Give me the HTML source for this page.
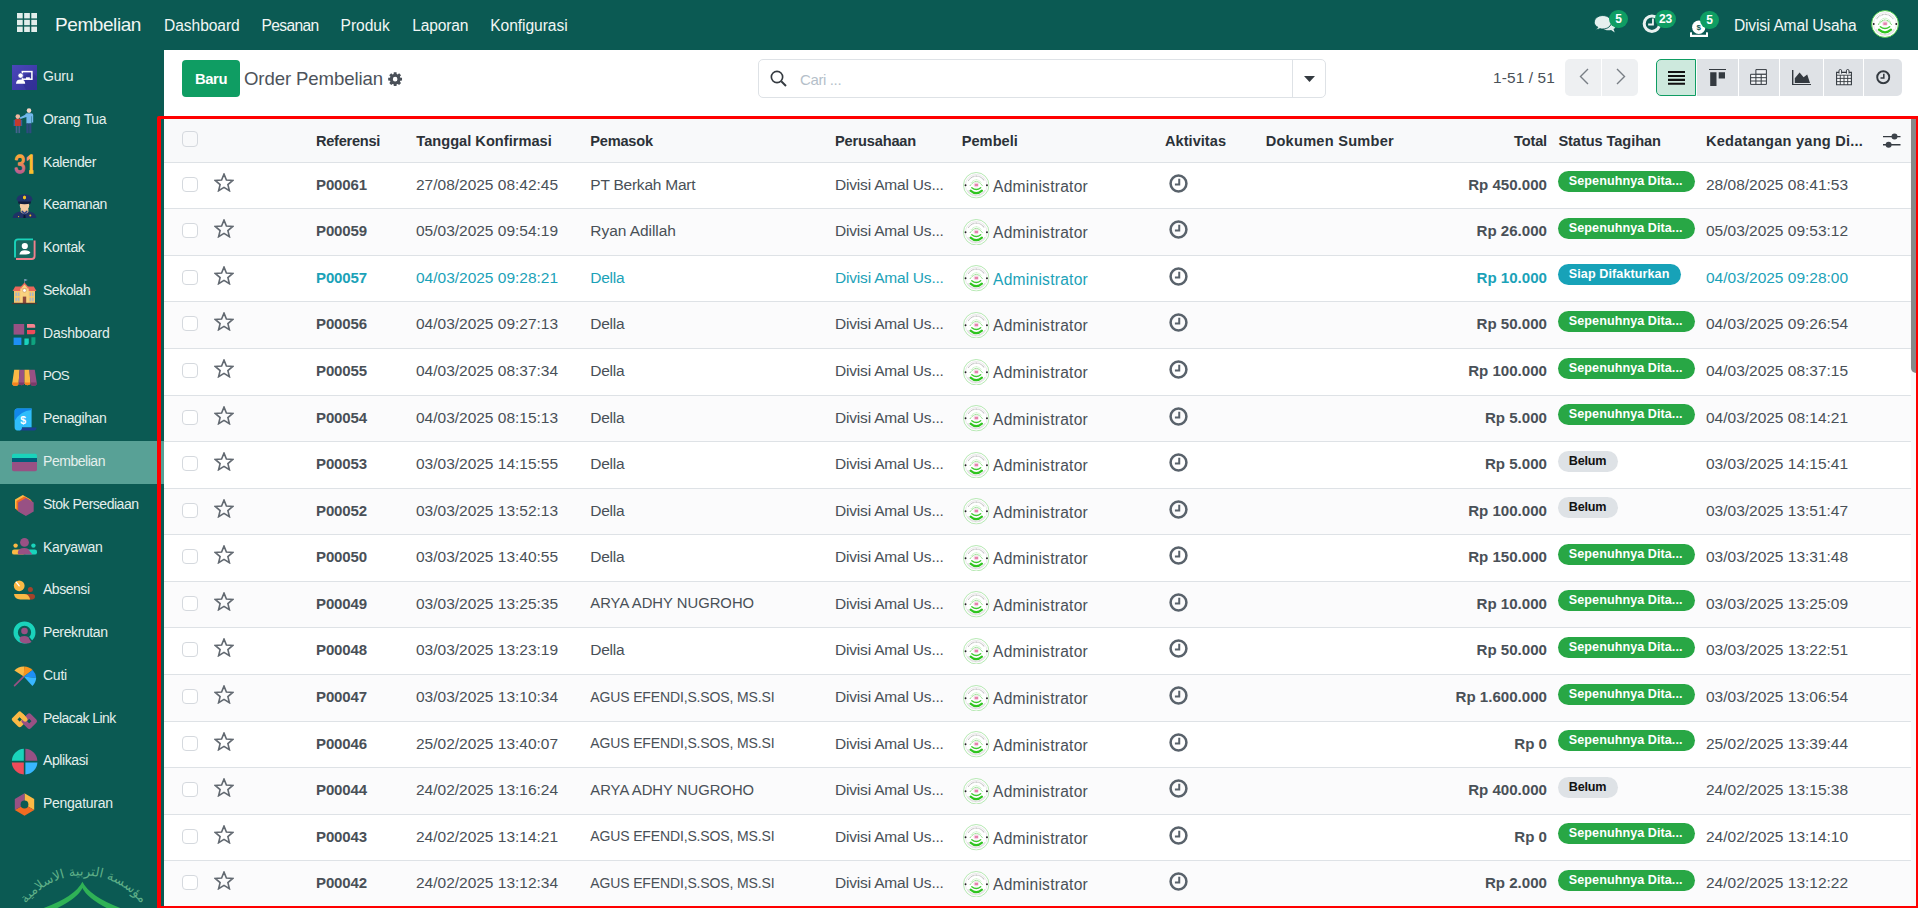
<!DOCTYPE html>
<html lang="id"><head><meta charset="utf-8"><title>Odoo - Order Pembelian</title>
<style>
*{box-sizing:border-box;margin:0;padding:0}
html,body{width:1918px;height:908px;overflow:hidden;background:#fff}
body{font-family:"Liberation Sans", sans-serif;font-size:15.5px;color:#495057;position:relative}
.abs{position:absolute}
.nav{position:absolute;left:0;top:0;width:1918px;height:50px;background:#0b5a53;color:#fff}
.nav .t{position:absolute;white-space:nowrap;line-height:50px;top:0.6px;color:#f1f6f5}
.side{position:absolute;left:0;top:50px;width:164px;height:858px;background:#0b5a53;overflow:hidden}
.side .it{position:absolute;left:0;width:164px;height:43px}
.side .it.act{background:#58a196}
.side .it svg{position:absolute;left:11px;top:8px;width:27px;height:27px}
.side .it span{position:absolute;left:43px;top:0;line-height:41.5px;font-size:14px;color:#e4efed;white-space:nowrap}
.cp{position:absolute;left:164px;top:50px;width:1754px;height:69px;background:#fff}
.tbl{position:absolute;left:164px;top:119px;width:1747px;height:789px;background:#fff;overflow:hidden}
.hd{position:absolute;left:0;top:0;width:1747px;height:44px;background:#f8f9fa;border-bottom:1px solid #dee2e6;font-weight:bold;color:#2c3238}
.hd span{position:absolute;top:1px;line-height:42px;white-space:nowrap;font-size:14.6px}
.row{position:absolute;left:0;width:1747px;border-bottom:1px solid #dee2e6;background:#fff}
.row.alt{background:#fbfbfc}
.row span.c{position:absolute;top:-1px;white-space:nowrap}
.row.info{color:#1ba2b8}
.row svg.ck{color:#59626b}
.cb{position:absolute;left:18px;width:16px;height:15px;border:1px solid #d5d9de;border-radius:4px;background:#fff}
.b{font-weight:bold}
.badge{position:absolute;left:1394px;height:21px;border-radius:11px;color:#fff;font-weight:bold;font-size:12.6px;line-height:21.6px;padding:0 10.8px;white-space:nowrap}
.badge.bg-s{width:137px}
.badge.bg-i{width:123px}
.badge.bg-n{width:60px}
.bg-s{background:#28a745}
.bg-i{background:#17a2b8}
.bg-n{background:#dee2e6;color:#111}
svg{display:block}
</style></head><body>
<svg width="0" height="0" style="position:absolute"><defs>
<symbol id="i-grid" viewBox="0 0 20 19"><rect x="0.00" y="0.00" width="5.7" height="5.4" fill="#e3eeec"/><rect x="7.15" y="0.00" width="5.7" height="5.4" fill="#e3eeec"/><rect x="14.30" y="0.00" width="5.7" height="5.4" fill="#e3eeec"/><rect x="0.00" y="6.80" width="5.7" height="5.4" fill="#e3eeec"/><rect x="7.15" y="6.80" width="5.7" height="5.4" fill="#e3eeec"/><rect x="14.30" y="6.80" width="5.7" height="5.4" fill="#e3eeec"/><rect x="0.00" y="13.60" width="5.7" height="5.4" fill="#e3eeec"/><rect x="7.15" y="13.60" width="5.7" height="5.4" fill="#e3eeec"/><rect x="14.30" y="13.60" width="5.7" height="5.4" fill="#e3eeec"/></symbol>
<symbol id="i-comments" viewBox="0 0 43 35">
<path d="M40 33.5 L33 28.8 Q30.5 29.5 28 29.5 C20 29.5 14.5 25.3 14.5 20 C14.5 14.7 20 10.5 28 10.5 C36 10.5 42 14.7 42 20 C42 23 40.3 25.4 37.6 27.2 Z" fill="#dfeceb"/>
<path d="M3 29.5 L7.5 23.5 C3 21.5 0.5 18 0.5 14 C0.5 7 7.5 1 17 1 C26.5 1 33.5 7 33.5 14 C33.5 21 26.5 27 17 27 Q14 27 11.5 26.3 Z" fill="#e6f0ef" stroke="#0b5a53" stroke-width="1.8"/>
</symbol>
<symbol id="i-clocknav" viewBox="0 0 40 40">
<circle cx="19.5" cy="21" r="15.2" fill="none" stroke="#e9f1f0" stroke-width="6"/>
<path d="M21.5 11V22.5H12" fill="none" stroke="#e9f1f0" stroke-width="3.6"/>
</symbol>
<symbol id="i-money" viewBox="0 0 36 34">
<rect x="0" y="24.5" width="36" height="9.5" rx="1" fill="#fff"/>
<rect x="4" y="24" width="28" height="5.5" fill="#0b5a53"/>
<circle cx="17.5" cy="14.5" r="13.3" fill="#fff"/>
<text x="17.5" y="20.5" text-anchor="middle" font-family="Liberation Sans, sans-serif" font-weight="bold" font-size="16" fill="#0b5a53">$</text>
</symbol>
<symbol id="i-cog" viewBox="0 0 28 28"><path d="M11.04 3.82 L11.29 0.37 L16.71 0.37 L16.96 3.82 L19.11 4.71 L21.72 2.44 L25.56 6.28 L23.29 8.89 L24.18 11.04 L27.63 11.29 L27.63 16.71 L24.18 16.96 L23.29 19.11 L25.56 21.72 L21.72 25.56 L19.11 23.29 L16.96 24.18 L16.71 27.63 L11.29 27.63 L11.04 24.18 L8.89 23.29 L6.28 25.56 L2.44 21.72 L4.71 19.11 L3.82 16.96 L0.37 16.71 L0.37 11.29 L3.82 11.04 L4.71 8.89 L2.44 6.28 L6.28 2.44 L8.89 4.71Z M18.50 14A4.5 4.5 0 1 0 9.50 14A4.5 4.5 0 1 0 18.50 14Z" fill="#4a5058" fill-rule="evenodd"/></symbol>
<symbol id="i-search" viewBox="0 0 34 34"><circle cx="14" cy="14" r="11.3" fill="none" stroke="#343a40" stroke-width="3.3"/><path d="M22.5 22.5L32 32" stroke="#343a40" stroke-width="3.9" stroke-linecap="butt"/></symbol>
<symbol id="i-vlist" viewBox="0 0 17 14"><path d="M0 0h17v2.1H0zM0 3.9h17v2.1H0zM0 7.8h17v2.1H0zM0 11.7h17v2.1H0z" fill="#111"/></symbol>
<symbol id="i-vkanban" viewBox="0 0 17 17"><path d="M0 0h17v1H0zM1.2 3.2h6.3V17H1.2zM9.7 3.2H16v6.3H9.7z" fill="#343a40"/></symbol>
<symbol id="i-vpivot" viewBox="0 0 17 16"><path d="M5.9 .6H16.4V5.3H5.9Z" fill="#eef0f3" stroke="#343a40" stroke-width="1"/><path d="M.6 5.3H16.4V15.4H.6Z" fill="#f6f7f9" stroke="#343a40" stroke-width="1"/><path d="M5.9 5.3V15.4M11.2 5.3V15.4M.6 8.7H16.4M.6 12H16.4" fill="none" stroke="#343a40" stroke-width="1"/></symbol>
<symbol id="i-vgraph" viewBox="0 0 19 15.5"><path d="M.7 0V14.8H19" fill="none" stroke="#343a40" stroke-width="1.4"/><path d="M2.8 13V8.2L7.6 2.6L11.6 7.2L15.2 4.6L18 13Z" fill="#343a40"/></symbol>
<symbol id="i-vcal" viewBox="0 0 16 16.5"><path d="M.6 3.4H15.4V15.9H.6Z" fill="#f6f7f9" stroke="#343a40" stroke-width="1.1"/><path d="M.6 6.2H15.4M4.3 6.2V15.9M8 6.2V15.9M11.7 6.2V15.9M.6 9.4H15.4M.6 12.6H15.4" stroke="#343a40" stroke-width=".9" fill="none"/><path d="M3 4.6V1.8Q3 .5 4.3 .5T5.6 1.8V4.6M10.4 4.6V1.8Q10.4 .5 11.7 .5T13 1.8V4.6" fill="#eef0f3" stroke="#343a40" stroke-width="1"/></symbol>
<symbol id="i-clock" viewBox="0 0 18 18"><circle cx="9" cy="9" r="7.5" fill="none" stroke="currentColor" stroke-width="2.4"/><path d="M9.7 4.6V9.9H5.6" fill="none" stroke="currentColor" stroke-width="1.9"/></symbol>
<symbol id="i-star" viewBox="0 0 20 19"><path d="M10.00 1.10 L12.41 6.98 L18.75 7.46 L13.90 11.57 L15.41 17.74 L10.00 14.40 L4.59 17.74 L6.10 11.57 L1.25 7.46 L7.59 6.98Z" fill="none" stroke="#626971" stroke-width="1.6" stroke-linejoin="miter"/></symbol>
<symbol id="i-sliders" viewBox="0 0 18 16"><path d="M0 3.6H17.5M0 11.8H17.5" stroke="#343a40" stroke-width="1.4"/><circle cx="11.5" cy="3.6" r="3" fill="#3d434a"/><circle cx="5.6" cy="11.8" r="3" fill="#3d434a"/></symbol>
<symbol id="i-logo" viewBox="0 0 52 52">
<circle cx="26" cy="26" r="25" fill="#fff" stroke="#45c93c" stroke-width="1.6"/>
<circle cx="26" cy="26" r="21.3" fill="none" stroke="#d9d4d9" stroke-width="1"/>
<path d="M10.5 17 A18 18 0 0 1 41.5 17" fill="none" stroke="#a9a9a9" stroke-width="2.2" stroke-dasharray="1.6 1" opacity=".85"/>
<path d="M9.5 36.5 A19.5 19.5 0 0 0 42.5 36.5" fill="none" stroke="#b9b9b9" stroke-width="2" stroke-dasharray="1.4 1.1" opacity=".8"/>
<path d="M13.5 27.5 Q26 10 38.5 27.5" fill="none" stroke="#6fd867" stroke-width="1.9" stroke-dasharray="2.4 .9"/>
<path d="M15.5 21.5 Q26 9 36.5 21.5" fill="none" stroke="#a8e6a2" stroke-width="1.5" stroke-dasharray="2 1"/>
<circle cx="26" cy="25" r="5.4" fill="#f7e3ec"/>
<rect x="23" y="23.2" width="6.4" height="4.6" fill="#e681ad"/>
<path d="M17.3 31 Q26 38 34.7 31" fill="none" stroke="#3cc92e" stroke-width="2.7" stroke-linecap="round"/>
<path d="M14.8 36.6 Q26 46.5 37.2 36.6" fill="none" stroke="#2fc41f" stroke-width="4.2" stroke-linecap="round"/>
<circle cx="5" cy="26" r="1.9" fill="#222"/><circle cx="47" cy="26" r="1.9" fill="#222"/>
</symbol>
<symbol id="i-logo2" viewBox="0 0 52 52">
<circle cx="26" cy="26" r="25" fill="#fff" stroke="#8fdc8a" stroke-width="1.3"/>
<circle cx="26" cy="26" r="21.3" fill="none" stroke="#d9d4d9" stroke-width="1"/>
<path d="M10.5 17 A18 18 0 0 1 41.5 17" fill="none" stroke="#a9a9a9" stroke-width="2.2" stroke-dasharray="1.6 1" opacity=".85"/>
<path d="M9.5 36.5 A19.5 19.5 0 0 0 42.5 36.5" fill="none" stroke="#b9b9b9" stroke-width="2" stroke-dasharray="1.4 1.1" opacity=".8"/>
<path d="M13.5 27.5 Q26 10 38.5 27.5" fill="none" stroke="#6fd867" stroke-width="1.9" stroke-dasharray="2.4 .9"/>
<path d="M15.5 21.5 Q26 9 36.5 21.5" fill="none" stroke="#a8e6a2" stroke-width="1.5" stroke-dasharray="2 1"/>
<circle cx="26" cy="25" r="5.4" fill="#f7e3ec"/>
<rect x="23" y="23.2" width="6.4" height="4.6" fill="#e681ad"/>
<path d="M17.3 31 Q26 38 34.7 31" fill="none" stroke="#3cc92e" stroke-width="2.7" stroke-linecap="round"/>
<path d="M14.8 36.6 Q26 46.5 37.2 36.6" fill="none" stroke="#2fc41f" stroke-width="4.2" stroke-linecap="round"/>
<circle cx="5" cy="26" r="1.9" fill="#222"/><circle cx="47" cy="26" r="1.9" fill="#222"/>
</symbol>
<linearGradient id="g31a" x1="0" y1="0" x2="0" y2="1"><stop offset="0" stop-color="#fbb03b"/><stop offset=".4" stop-color="#f5993f"/><stop offset=".72" stop-color="#c9658a"/><stop offset="1" stop-color="#9c5388"/></linearGradient>
<linearGradient id="g31b" x1="0" y1="0" x2="1" y2="0"><stop offset=".5" stop-color="#ee6a93"/><stop offset=".66" stop-color="#f59a62"/><stop offset=".74" stop-color="#fbc02d"/><stop offset="1" stop-color="#fbc02d"/></linearGradient>
<linearGradient id="gguru" x1="0" y1="0" x2="1" y2="1"><stop offset="0" stop-color="#4a47ba"/><stop offset="1" stop-color="#36339c"/></linearGradient>
</defs></svg>
<div class="nav"><svg class="abs" style="left:17px;top:13px" width="20" height="19" viewBox="0 0 20 19"><use href="#i-grid"/></svg><span class="t" style="left:55px;top:0;font-size:19px;letter-spacing:-0.42px">Pembelian</span><span class="t" style="left:164.1px;font-size:15.6px;letter-spacing:-0.09px">Dashboard</span><span class="t" style="left:261.5px;font-size:15.6px;letter-spacing:-0.65px">Pesanan</span><span class="t" style="left:340.5px;font-size:15.6px;letter-spacing:-0.02px">Produk</span><span class="t" style="left:412.3px;font-size:15.6px;letter-spacing:-0.19px">Laporan</span><span class="t" style="left:490.2px;font-size:15.6px;letter-spacing:-0.06px">Konfigurasi</span><svg class="abs" style="left:1593.8px;top:15.2px" width="22.3" height="18.2" viewBox="0 0 43 35"><use href="#i-comments"/></svg><svg class="abs" style="left:1642.3px;top:12.6px" width="20.4" height="20.4" viewBox="0 0 40 40"><use href="#i-clocknav"/></svg><svg class="abs" style="left:1690px;top:19.5px" width="18" height="17" viewBox="0 0 36 34"><use href="#i-money"/></svg><span class="abs" style="left:1609px;top:9.5px;width:19.3px;height:18.5px;border-radius:9.5px;background:#0f9d63;color:#fff;font-size:12px;font-weight:bold;line-height:18.5px;text-align:center">5</span><span class="abs" style="left:1655px;top:9.5px;width:21.2px;height:18.5px;border-radius:9.5px;background:#0f9d63;color:#fff;font-size:12px;font-weight:bold;line-height:18.5px;text-align:center">23</span><span class="abs" style="left:1699.8px;top:10.5px;width:19.5px;height:18.5px;border-radius:9.5px;background:#0f9d63;color:#fff;font-size:12px;font-weight:bold;line-height:18.5px;text-align:center">5</span><span class="t" style="left:1734px;top:1px;font-size:15.6px;letter-spacing:-0.19px">Divisi Amal Usaha</span><svg class="abs" style="left:1871.3px;top:9.5px" width="28" height="28" viewBox="0 0 52 52"><use href="#i-logo"/></svg></div>
<div class="side"><div class="it" style="top:6.00px"><svg viewBox="0 0 27 27"><rect x="1" y="1" width="25" height="25" fill="url(#gguru)"/><path d="M9 14L21 8L26 13V26H15Z" fill="#2e2b8f" opacity=".55"/><rect x="11.3" y="7.6" width="9.6" height="7.6" fill="none" stroke="#fff" stroke-width="1.5"/><rect x="15" y="13.3" width="3.8" height="1.9" fill="#fff"/><circle cx="9.6" cy="11.6" r="2.7" fill="#fff" stroke="#3f3cab" stroke-width=".8"/><path d="M5 19.8q0-4.3 4.6-4.3t4.6 4.3z" fill="#fff"/></svg><span style="letter-spacing:-0.21px">Guru</span></div><div class="it" style="top:48.78px"><svg viewBox="0 0 27 27"><circle cx="18" cy="3.6" r="2.3" fill="#f6d6c6"/><path d="M14.2 7.7q0-1.5 1.5-1.5h4.8q1.7 0 1.7 1.7V15.4h-1.4V9.2h-.4v7.4h-5V9.9L9.4 12L8.8 10.6Z" fill="#72b8ec"/><rect x="15.4" y="16.4" width="2.2" height="9.8" fill="#2f4a80"/><rect x="18.2" y="16.4" width="2.2" height="9.8" fill="#2f4a80"/><circle cx="6.8" cy="9.6" r="2.3" fill="#f0b7a0"/><path d="M3.4 13.5q0-1.6 1.6-1.6h3.8q1.6 0 1.6 1.6v5.6H3.4z" fill="#c4392d"/><rect x="2.6" y="13" width="1.4" height="6" fill="#3f5e96"/><rect x="9.8" y="13" width="1.4" height="6" fill="#3f5e96"/><rect x="4.7" y="19.1" width="1.7" height="7" fill="#46628f"/><rect x="7.4" y="19.1" width="1.7" height="7" fill="#46628f"/></svg><span style="letter-spacing:-0.32px">Orang Tua</span></div><div class="it" style="top:91.56px"><svg viewBox="0 0 27 27"><text x="3.2" y="22.8" font-family="Liberation Sans, sans-serif" font-size="25.4" stroke-width="1.5" stroke-linejoin="round" textLength="22" lengthAdjust="spacingAndGlyphs"><tspan fill="url(#g31a)" stroke="url(#g31a)">3</tspan><tspan fill="url(#g31b)" stroke="url(#g31b)">1</tspan></text><path d="M14 19.9H18.1V25H14ZM22.5 19.9H26V25H22.5Z" fill="#0b5a53"/></svg><span style="letter-spacing:-0.38px">Kalender</span></div><div class="it" style="top:134.34px"><svg viewBox="0 0 27 27"><path d="M9.6 17h7.8v5H9.6z" fill="#e6b98f"/><ellipse cx="13.5" cy="13.6" rx="4.7" ry="5.2" fill="#f3cba3"/><path d="M5.6 7.2Q6 2.6 13.5 2.2Q21 2.6 21.4 7.2L19.8 10H7.2Z" fill="#20346a"/><path d="M7.2 9.6h12.6v1.9q-6.3 1.5-12.6 0z" fill="#101b3c"/><path d="M13.5 3.4l1.5 1v2l-1.5 1.1-1.5-1.1v-2z" fill="#f4c21c"/><path d="M1.6 26Q2 21 8.6 19.6L13.5 22.6L18.4 19.6Q25 21 25.4 26Z" fill="#1f3266"/><path d="M12.8 22.4h1.4l.5 3.6h-2.4z" fill="#0e1733"/><path d="M10.3 19.4l3.2 3.4 3.2-3.4-1 -.9-2.2 2-2.2-2z" fill="#2b4285"/><circle cx="19.3" cy="23.4" r="1" fill="#f4c21c"/><circle cx="7.6" cy="24.6" r=".6" fill="#f4c21c"/></svg><span style="letter-spacing:-0.50px">Keamanan</span></div><div class="it" style="top:177.12px"><svg viewBox="0 0 27 27"><rect x="4" y="4.4" width="19.6" height="19.6" rx="3" fill="#17665f"/><path d="M23.6 5.4V21Q23.6 24 20.6 24H5" fill="none" stroke="#f07f8c" stroke-width="1.9"/><path d="M4 22.4V7.4Q4 4.4 7 4.4H22" fill="none" stroke="#1ad3bb" stroke-width="1.9"/><circle cx="13.8" cy="11" r="3.1" fill="#fff"/><path d="M8.4 19.6q.6-4.4 5.4-4.4t5.6 2.6q-1 1.8-4.4 1.8z" fill="#fff"/></svg><span style="letter-spacing:-0.35px">Kontak</span></div><div class="it" style="top:219.90px"><svg viewBox="0 0 27 27"><path d="M13.5 1v4" stroke="#7a8794" stroke-width=".7"/><path d="M13.6 1.1l3.2.9-3.2 1z" fill="#8fb4d9"/><rect x="3" y="12" width="21" height="13" fill="#f6c56a"/><path d="M1.6 13L4.2 8.4H22.8L25.4 13Z" fill="#e9675a"/><rect x="9.3" y="9.6" width="8.4" height="15.4" fill="#f9d27f"/><path d="M8.2 10.4L13.5 4.4L18.8 10.4Z" fill="#e9675a"/><path d="M9.9 10.4L13.5 6.4L17.1 10.4Z" fill="#f9d27f"/><circle cx="13.5" cy="12.4" r="1.9" fill="#fff" stroke="#c98b4a" stroke-width=".6"/><rect x="11.8" y="18.6" width="3.4" height="6.4" fill="#8e4a3b"/><path d="M4.4 14.6h1.6v3.4H4.4zM6.8 14.6h1.6v3.4H6.8zM18.6 14.6h1.6v3.4h-1.6zM21 14.6h1.6v3.4H21zM4.4 19.8h1.6v3.4H4.4zM6.8 19.8h1.6v3.4H6.8zM18.6 19.8h1.6v3.4h-1.6zM21 19.8h1.6v3.4H21z" fill="#a9b7c6"/><rect x="1" y="24.8" width="25" height="1.3" fill="#4b3a33"/></svg><span style="letter-spacing:-0.48px">Sekolah</span></div><div class="it" style="top:262.68px"><svg viewBox="0 0 27 27"><rect x="2.6" y="3" width="10.6" height="10.6" fill="#985184"/><path d="M16 3h6.4a1.8 1.8 0 011.8 1.8V6.8H16z" fill="#f7838f"/><path d="M16 9h8.2v2.4a1.8 1.8 0 01-1.8 1.8H16z" fill="#ef4b5a"/><rect x="2.6" y="16.6" width="7.8" height="7.4" fill="#1e8ff5"/><path d="M13.4 17.4h4.4V22a2 2 0 01-2 2h-2.4z" fill="#1ad3bb"/><path d="M20.4 16.2h4V22a2 2 0 01-2 2h-2z" fill="#0fa37f"/></svg><span style="letter-spacing:-0.22px">Dashboard</span></div><div class="it" style="top:305.46px"><svg viewBox="0 0 27 27"><path d="M3.2 6.8H8.6L7.6 20.2a3.2 2.6 0 01-6.4 0Z" fill="#fbb945"/><path d="M8.6 6.8H13.5V20.2a3 2.6 0 01-5.9 0Z" fill="#985184"/><path d="M13.5 6.8H18.4L19.4 20.2a3 2.6 0 01-5.9 0Z" fill="#fbb945"/><path d="M18.4 6.8H23.8L25.8 20.2a3.2 2.6 0 01-6.4 0Z" fill="#985184"/><path d="M1.2 19.6h6.4v.6a3.2 2.6 0 01-6.4 0zM13.5 19.6h5.9v.6a3 2.6 0 01-5.9 0z" fill="#f58220"/><path d="M7.6 19.6h5.9v.6a3 2.6 0 01-5.9 0zM19.4 19.6h6.4v.6a3.2 2.6 0 01-6.4 0z" fill="#7b3b69"/></svg><span style="font-size:13.3px;letter-spacing:-0.70px">POS</span></div><div class="it" style="top:348.24px"><svg viewBox="0 0 27 27"><path d="M10 21.4h15.6q-.4 3.2-3.4 3.2H8z" fill="#1c3f95"/><path d="M3.6 5.4Q3.6 2.6 6.4 2.6H20.6V21.2H11q.2 3.4-3.6 3.4T3.6 21.2Z" fill="#2fbdfb"/><path d="M3.6 5.4Q3.6 2.6 6.4 2.6H20.6V4Q9 5 3.6 15Z" fill="#1287ea"/><text x="12.2" y="18.2" text-anchor="middle" font-family="Liberation Sans, sans-serif" font-weight="bold" font-size="10.5" fill="#fff">$</text></svg><span style="letter-spacing:-0.41px">Penagihan</span></div><div class="it act" style="top:391.02px"><svg viewBox="0 0 27 27"><path d="M1 6.6Q1 4.8 2.8 4.8H24.2Q26 4.8 26 6.6V9H1Z" fill="#1ad3bb"/><rect x="1" y="9" width="25" height="4" fill="#005e7a"/><path d="M1 13H26V20.4Q26 22.2 24.2 22.2H2.8Q1 22.2 1 20.4Z" fill="#985184"/></svg><span style="letter-spacing:-0.46px">Pembelian</span></div><div class="it" style="top:433.80px"><svg viewBox="0 0 27 27"><polygon points="11.80,2.90 19.59,7.40 19.59,16.40 11.80,20.90 4.01,16.40 4.01,7.40" fill="#fbb945"/><polygon points="13.30,4.40 21.09,8.90 21.09,17.90 13.30,22.40 5.51,17.90 5.51,8.90" fill="#f26b21"/><polygon points="14.90,6.00 22.69,10.50 22.69,19.50 14.90,24.00 7.11,19.50 7.11,10.50" fill="#985184"/></svg><span style="letter-spacing:-0.48px">Stok Persediaan</span></div><div class="it" style="top:476.58px"><svg viewBox="0 0 27 27"><circle cx="4.6" cy="10.6" r="2.2" fill="#fbb945"/><rect x="1" y="14.4" width="13" height="5.2" rx="2.2" fill="#fbb945"/><circle cx="22.4" cy="10.6" r="2.2" fill="#1ad3bb"/><rect x="13" y="14.4" width="13" height="5.2" rx="2.2" fill="#1ad3bb"/><circle cx="13.5" cy="7.4" r="4.4" fill="#985184"/><path d="M6.8 17.2Q7.6 13 13.5 13Q17.6 13 19 16.4L21.4 19.6H9Q6.6 19.6 6.8 17.2Z" fill="#985184"/></svg><span style="letter-spacing:-0.36px">Karyawan</span></div><div class="it" style="top:519.36px"><svg viewBox="0 0 27 27"><circle cx="8.2" cy="8.8" r="5.4" fill="#fbb945"/><path d="M8.2 8.8L5.2 5.2" stroke="#fff" stroke-width="1.3" stroke-linecap="round"/><circle cx="19.4" cy="12.6" r="2.5" fill="#a3432b"/><path d="M14 17h7.4Q24 17 24 19.6T21.4 22.4H17z" fill="#a3432b"/><path d="M3 17H13.4Q17.6 17 19.2 22.4H9.4Q3.4 22.4 3 17Z" fill="#fbb945"/></svg><span style="letter-spacing:-0.47px">Absensi</span></div><div class="it" style="top:562.14px"><svg viewBox="0 0 27 27"><circle cx="13.5" cy="12.4" r="8.8" fill="none" stroke="#1ad3bb" stroke-width="4.4"/><path d="M17 18L22 24" stroke="#0b5a53" stroke-width="3.4"/><circle cx="13.5" cy="11" r="3.3" fill="#985184"/><path d="M8.6 18.4Q9.4 16 13.5 16Q17.4 16 18.6 19.4L20.6 22Q16 24.8 10.2 22.6Q8.2 21 8.6 18.4Z" fill="#985184"/></svg><span style="letter-spacing:-0.38px">Perekrutan</span></div><div class="it" style="top:604.92px"><svg viewBox="0 0 27 27"><path d="M12.6 13.6L3.6 22.6" stroke="#985184" stroke-width="1.7" stroke-linecap="round"/><path d="M3.4 7.6A12.4 12.4 0 0113.2 3.4L12.8 13.4Z" fill="#fbb945"/><path d="M13.2 3.4A12.4 12.4 0 0121.6 7L12.8 13.4Z" fill="#f7941d"/><path d="M21.6 7A12.4 12.4 0 0125.2 15L12.8 13.4Z" fill="#1e8ff5"/><path d="M25.2 15A12.4 12.4 0 0121.4 23L12.8 13.4Z" fill="#38b6ff"/><path d="M3.4 7.6L12.8 13.4L9 16Z" fill="#fbb945" opacity="0"/></svg><span style="letter-spacing:-0.25px">Cuti</span></div><div class="it" style="top:647.70px"><svg viewBox="0 0 27 27"><path d="M8.7 7.800000000000001L14.2 13.3L8.7 18.8L3.1999999999999993 13.3Z" fill="none" stroke="#fbb945" stroke-width="4.6" stroke-linejoin="round"/><path d="M18.2 9.7L23.7 15.2L18.2 20.7L12.7 15.2Z" fill="none" stroke="#985184" stroke-width="4.6" stroke-linejoin="round"/><path d="M10.6 9.7L14.2 13.3" stroke="#fbb945" stroke-width="4.6" stroke-linecap="round"/></svg><span style="letter-spacing:-0.56px">Pelacak Link</span></div><div class="it" style="top:690.48px"><svg viewBox="0 0 27 27"><path d="M12.8 12.8V.8A12.7 12.7 0 00.8 12.8Z" fill="#1ad3bb"/><path d="M14.4 12.8V.8A12.7 12.7 0 0126.4 12.8Z" fill="#985184"/><path d="M12.8 14.4V26.4A12.7 12.7 0 01.8 14.4Z" fill="#ef4b5a"/><path d="M14.4 14.4V26.4A12.7 12.7 0 0026.4 14.4Z" fill="#38b6ff"/></svg><span style="letter-spacing:-0.41px">Aplikasi</span></div><div class="it" style="top:733.26px"><svg viewBox="0 0 27 27"><polygon points="13.50,13.50 13.50,2.30 23.20,7.90 23.20,19.10" fill="#fbb945"/><polygon points="13.50,13.50 23.20,19.10 13.50,24.70 3.80,19.10" fill="#f26b21"/><polygon points="13.50,13.50 3.80,19.10 3.80,7.90 13.50,2.30" fill="#985184"/><circle cx="13.5" cy="13.5" r="3.9" fill="#0b5a53"/></svg><span style="letter-spacing:-0.27px">Pengaturan</span></div><svg class="abs" style="left:0;top:790px" width="164" height="68" viewBox="0 0 164 68">
<defs><path id="arc" d="M21.6 69.8 A73 73 0 0 1 145.4 69.8"/></defs>
<text font-family="DejaVu Sans, sans-serif" font-size="13" fill="#5fb088" direction="rtl" unicode-bidi="bidi-override"><textPath href="#arc" startOffset="50%" text-anchor="middle">مؤسسة التربية الاسلامية</textPath></text>
<path d="M82.4 41.8 Q75 57 41 69 L55.5 69 Q78 58 82.4 48 Q87 58 108.5 69 L123 69 Q90 57 82.4 41.8Z" fill="#2fb256"/>
</svg></div>
<div class="cp"><div class="abs" style="left:18px;top:10px;width:58px;height:37px;border-radius:4px;background:#0f9d63;color:#fff;text-align:center;line-height:38.8px;font-size:14.8px;font-weight:bold"><span style="letter-spacing:-0.38px">Baru</span></div><span class="abs" style="left:80px;top:10.3px;line-height:38px;font-size:18.6px;color:#4d535b;white-space:nowrap;letter-spacing:-0.11px">Order Pembelian</span><svg class="abs" style="left:224.4px;top:21.8px" width="14.3" height="14.3" viewBox="0 0 28 28"><use href="#i-cog"/></svg><div class="abs" style="left:594px;top:9px;width:568px;height:38.5px;border:1px solid #dee2e6;border-radius:5px"></div><div class="abs" style="left:1128px;top:10px;width:1px;height:37px;background:#dee2e6"></div><svg class="abs" style="left:606px;top:20.3px" width="17" height="17" viewBox="0 0 34 34"><use href="#i-search"/></svg><span class="abs" style="left:636px;top:11.4px;line-height:38px;font-size:15px;color:#b5bfca;white-space:nowrap;letter-spacing:-0.37px">Cari ...</span><svg class="abs" style="left:1140px;top:26px" width="11" height="6" viewBox="0 0 11 6"><path d="M0 0h11L5.5 6z" fill="#343a40"/></svg><span class="abs" style="left:1329px;top:9px;line-height:38px;font-size:15.4px;white-space:nowrap;letter-spacing:0.13px">1-51 / 51</span><div class="abs" style="left:1401px;top:9px;width:36px;height:37px;background:#eef0f2;border-radius:5px 0 0 5px"></div><div class="abs" style="left:1438px;top:9px;width:36px;height:37px;background:#eef0f2;border-radius:0 5px 5px 0"></div><svg class="abs" style="left:1414.5px;top:17.6px" width="10" height="17" viewBox="0 0 10 17"><path d="M9 1L1.5 8.5L9 16" fill="none" stroke="#787e85" stroke-width="1.4"/></svg><svg class="abs" style="left:1451.5px;top:17.6px" width="10" height="17" viewBox="0 0 10 17"><path d="M1 1L8.5 8.5L1 16" fill="none" stroke="#787e85" stroke-width="1.4"/></svg><div class="abs" style="left:1492.2px;top:9px;width:39.9px;height:37px;background:#cde9dd;border:1px solid #0f9d63;border-radius:5px 0 0 5px"></div><div class="abs" style="left:1533px;top:9px;width:41.2px;height:37px;background:#dfe2e6"></div><div class="abs" style="left:1575px;top:9px;width:40.3px;height:37px;background:#dfe2e6"></div><div class="abs" style="left:1616.2px;top:9px;width:42.8px;height:37px;background:#dfe2e6"></div><div class="abs" style="left:1660px;top:9px;width:39.0px;height:37px;background:#dfe2e6"></div><div class="abs" style="left:1700px;top:9px;width:37.7px;height:37px;background:#dfe2e6;border-radius:0 5px 5px 0"></div><svg class="abs" style="left:1504px;top:20.5px" width="17" height="14" viewBox="0 0 17 14"><use href="#i-vlist"/></svg><svg class="abs" style="left:1545.4px;top:18.7px" width="17" height="17" viewBox="0 0 17 17"><use href="#i-vkanban"/></svg><svg class="abs" style="left:1586.3px;top:19.4px" width="17" height="16" viewBox="0 0 17 16"><use href="#i-vpivot"/></svg><svg class="abs" style="left:1628.4px;top:19.9px" width="19" height="15.5" viewBox="0 0 19 15.5"><use href="#i-vgraph"/></svg><svg class="abs" style="left:1671.6px;top:19px" width="16" height="16.5" viewBox="0 0 16 16.5"><use href="#i-vcal"/></svg><svg class="abs" style="left:1712.2px;top:20.4px;color:#343a40" width="14.5" height="14.5" viewBox="0 0 18 18"><use href="#i-clock"/></svg></div>
<div class="tbl"><div class="hd"><i class="cb" style="top:12px;height:16px;background:#f8f9fa"></i><span style="left:152px;letter-spacing:-0.28px">Referensi</span><span style="left:252.3px;letter-spacing:0.02px">Tanggal Konfirmasi</span><span style="left:426.3px;letter-spacing:-0.23px">Pemasok</span><span style="left:671px;letter-spacing:-0.17px">Perusahaan</span><span style="left:797.7px;letter-spacing:0.04px">Pembeli</span><span style="left:1001px;letter-spacing:0.02px">Aktivitas</span><span style="left:1101.7px;letter-spacing:0.24px">Dokumen Sumber</span><span style="left:1394.4px;letter-spacing:-0.07px">Status Tagihan</span><span style="left:1542px;letter-spacing:0.22px">Kedatangan yang Di...</span><span style="right:364px;letter-spacing:-0.16px">Total</span><svg class="abs" style="left:1718.5px;top:13.5px" width="18" height="16" viewBox="0 0 18 16"><use href="#i-sliders"/></svg></div><div class="row" style="top:44px;height:46px;line-height:45px"><i class="cb" style="top:13.5px"></i><svg class="abs" style="left:50.3px;top:9.5px" width="20" height="19" viewBox="0 0 20 19"><use href="#i-star"/></svg><span class="c b" style="left:152px;font-size:15px;letter-spacing:-0.12px">P00061</span><span class="c" style="left:252px;letter-spacing:-0.01px">27/08/2025 08:42:45</span><span class="c" style="left:426.3px;letter-spacing:-0.23px">PT Berkah Mart</span><span class="c" style="left:671px;letter-spacing:-0.19px">Divisi Amal Us...</span><svg class="abs" style="left:799px;top:9.0px" width="26.5" height="26.5" viewBox="0 0 52 52"><use href="#i-logo2"/></svg><span class="c" style="left:829px;top:0.5px;font-size:15.6px;letter-spacing:0.24px">Administrator</span><svg class="abs ck" style="left:1004.8px;top:10.9px" width="19" height="19" viewBox="0 0 18 18"><use href="#i-clock"/></svg><span class="c b" style="right:364px;font-size:15.1px">Rp 450.000</span><div class="badge bg-s" style="top:8.2px"><span style="letter-spacing:0.06px">Sepenuhnya Dita...</span></div><span class="c" style="left:1542px;letter-spacing:-0.01px">28/08/2025 08:41:53</span></div><div class="row alt" style="top:90px;height:47px;line-height:46px"><i class="cb" style="top:14.0px"></i><svg class="abs" style="left:50.3px;top:10.0px" width="20" height="19" viewBox="0 0 20 19"><use href="#i-star"/></svg><span class="c b" style="left:152px;font-size:15px;letter-spacing:-0.12px">P00059</span><span class="c" style="left:252px;letter-spacing:-0.01px">05/03/2025 09:54:19</span><span class="c" style="left:426.3px;letter-spacing:-0.05px">Ryan Adillah</span><span class="c" style="left:671px;letter-spacing:-0.19px">Divisi Amal Us...</span><svg class="abs" style="left:799px;top:9.5px" width="26.5" height="26.5" viewBox="0 0 52 52"><use href="#i-logo2"/></svg><span class="c" style="left:829px;top:0.5px;font-size:15.6px;letter-spacing:0.24px">Administrator</span><svg class="abs ck" style="left:1004.8px;top:11.4px" width="19" height="19" viewBox="0 0 18 18"><use href="#i-clock"/></svg><span class="c b" style="right:364px;font-size:15.1px">Rp 26.000</span><div class="badge bg-s" style="top:8.7px"><span style="letter-spacing:0.06px">Sepenuhnya Dita...</span></div><span class="c" style="left:1542px;letter-spacing:-0.01px">05/03/2025 09:53:12</span></div><div class="row info" style="top:137px;height:46px;line-height:45px"><i class="cb" style="top:13.5px"></i><svg class="abs" style="left:50.3px;top:9.5px" width="20" height="19" viewBox="0 0 20 19"><use href="#i-star"/></svg><span class="c b" style="left:152px;font-size:15px;letter-spacing:-0.12px">P00057</span><span class="c" style="left:252px;letter-spacing:-0.01px">04/03/2025 09:28:21</span><span class="c" style="left:426.3px;letter-spacing:-0.27px">Della</span><span class="c" style="left:671px;letter-spacing:-0.19px">Divisi Amal Us...</span><svg class="abs" style="left:799px;top:9.0px" width="26.5" height="26.5" viewBox="0 0 52 52"><use href="#i-logo2"/></svg><span class="c" style="left:829px;top:0.5px;font-size:15.6px;letter-spacing:0.24px">Administrator</span><svg class="abs ck" style="left:1004.8px;top:10.9px" width="19" height="19" viewBox="0 0 18 18"><use href="#i-clock"/></svg><span class="c b" style="right:364px;font-size:15.1px">Rp 10.000</span><div class="badge bg-i" style="top:8.2px"><span style="letter-spacing:0.08px">Siap Difakturkan</span></div><span class="c" style="left:1542px;letter-spacing:-0.01px">04/03/2025 09:28:00</span></div><div class="row alt" style="top:183px;height:47px;line-height:46px"><i class="cb" style="top:14.0px"></i><svg class="abs" style="left:50.3px;top:10.0px" width="20" height="19" viewBox="0 0 20 19"><use href="#i-star"/></svg><span class="c b" style="left:152px;font-size:15px;letter-spacing:-0.12px">P00056</span><span class="c" style="left:252px;letter-spacing:-0.01px">04/03/2025 09:27:13</span><span class="c" style="left:426.3px;letter-spacing:-0.27px">Della</span><span class="c" style="left:671px;letter-spacing:-0.19px">Divisi Amal Us...</span><svg class="abs" style="left:799px;top:9.5px" width="26.5" height="26.5" viewBox="0 0 52 52"><use href="#i-logo2"/></svg><span class="c" style="left:829px;top:0.5px;font-size:15.6px;letter-spacing:0.24px">Administrator</span><svg class="abs ck" style="left:1004.8px;top:11.4px" width="19" height="19" viewBox="0 0 18 18"><use href="#i-clock"/></svg><span class="c b" style="right:364px;font-size:15.1px">Rp 50.000</span><div class="badge bg-s" style="top:8.7px"><span style="letter-spacing:0.06px">Sepenuhnya Dita...</span></div><span class="c" style="left:1542px;letter-spacing:-0.01px">04/03/2025 09:26:54</span></div><div class="row" style="top:230px;height:47px;line-height:46px"><i class="cb" style="top:14.0px"></i><svg class="abs" style="left:50.3px;top:10.0px" width="20" height="19" viewBox="0 0 20 19"><use href="#i-star"/></svg><span class="c b" style="left:152px;font-size:15px;letter-spacing:-0.12px">P00055</span><span class="c" style="left:252px;letter-spacing:-0.01px">04/03/2025 08:37:34</span><span class="c" style="left:426.3px;letter-spacing:-0.27px">Della</span><span class="c" style="left:671px;letter-spacing:-0.19px">Divisi Amal Us...</span><svg class="abs" style="left:799px;top:9.5px" width="26.5" height="26.5" viewBox="0 0 52 52"><use href="#i-logo2"/></svg><span class="c" style="left:829px;top:0.5px;font-size:15.6px;letter-spacing:0.24px">Administrator</span><svg class="abs ck" style="left:1004.8px;top:11.4px" width="19" height="19" viewBox="0 0 18 18"><use href="#i-clock"/></svg><span class="c b" style="right:364px;font-size:15.1px">Rp 100.000</span><div class="badge bg-s" style="top:8.7px"><span style="letter-spacing:0.06px">Sepenuhnya Dita...</span></div><span class="c" style="left:1542px;letter-spacing:-0.01px">04/03/2025 08:37:15</span></div><div class="row alt" style="top:277px;height:46px;line-height:45px"><i class="cb" style="top:13.5px"></i><svg class="abs" style="left:50.3px;top:9.5px" width="20" height="19" viewBox="0 0 20 19"><use href="#i-star"/></svg><span class="c b" style="left:152px;font-size:15px;letter-spacing:-0.12px">P00054</span><span class="c" style="left:252px;letter-spacing:-0.01px">04/03/2025 08:15:13</span><span class="c" style="left:426.3px;letter-spacing:-0.27px">Della</span><span class="c" style="left:671px;letter-spacing:-0.19px">Divisi Amal Us...</span><svg class="abs" style="left:799px;top:9.0px" width="26.5" height="26.5" viewBox="0 0 52 52"><use href="#i-logo2"/></svg><span class="c" style="left:829px;top:0.5px;font-size:15.6px;letter-spacing:0.24px">Administrator</span><svg class="abs ck" style="left:1004.8px;top:10.9px" width="19" height="19" viewBox="0 0 18 18"><use href="#i-clock"/></svg><span class="c b" style="right:364px;font-size:15.1px">Rp 5.000</span><div class="badge bg-s" style="top:8.2px"><span style="letter-spacing:0.06px">Sepenuhnya Dita...</span></div><span class="c" style="left:1542px;letter-spacing:-0.01px">04/03/2025 08:14:21</span></div><div class="row" style="top:323px;height:47px;line-height:46px"><i class="cb" style="top:14.0px"></i><svg class="abs" style="left:50.3px;top:10.0px" width="20" height="19" viewBox="0 0 20 19"><use href="#i-star"/></svg><span class="c b" style="left:152px;font-size:15px;letter-spacing:-0.12px">P00053</span><span class="c" style="left:252px;letter-spacing:-0.01px">03/03/2025 14:15:55</span><span class="c" style="left:426.3px;letter-spacing:-0.27px">Della</span><span class="c" style="left:671px;letter-spacing:-0.19px">Divisi Amal Us...</span><svg class="abs" style="left:799px;top:9.5px" width="26.5" height="26.5" viewBox="0 0 52 52"><use href="#i-logo2"/></svg><span class="c" style="left:829px;top:0.5px;font-size:15.6px;letter-spacing:0.24px">Administrator</span><svg class="abs ck" style="left:1004.8px;top:11.4px" width="19" height="19" viewBox="0 0 18 18"><use href="#i-clock"/></svg><span class="c b" style="right:364px;font-size:15.1px">Rp 5.000</span><div class="badge bg-n" style="top:8.7px"><span style="letter-spacing:-0.22px">Belum</span></div><span class="c" style="left:1542px;letter-spacing:-0.01px">03/03/2025 14:15:41</span></div><div class="row alt" style="top:370px;height:46px;line-height:45px"><i class="cb" style="top:13.5px"></i><svg class="abs" style="left:50.3px;top:9.5px" width="20" height="19" viewBox="0 0 20 19"><use href="#i-star"/></svg><span class="c b" style="left:152px;font-size:15px;letter-spacing:-0.12px">P00052</span><span class="c" style="left:252px;letter-spacing:-0.01px">03/03/2025 13:52:13</span><span class="c" style="left:426.3px;letter-spacing:-0.27px">Della</span><span class="c" style="left:671px;letter-spacing:-0.19px">Divisi Amal Us...</span><svg class="abs" style="left:799px;top:9.0px" width="26.5" height="26.5" viewBox="0 0 52 52"><use href="#i-logo2"/></svg><span class="c" style="left:829px;top:0.5px;font-size:15.6px;letter-spacing:0.24px">Administrator</span><svg class="abs ck" style="left:1004.8px;top:10.9px" width="19" height="19" viewBox="0 0 18 18"><use href="#i-clock"/></svg><span class="c b" style="right:364px;font-size:15.1px">Rp 100.000</span><div class="badge bg-n" style="top:8.2px"><span style="letter-spacing:-0.22px">Belum</span></div><span class="c" style="left:1542px;letter-spacing:-0.01px">03/03/2025 13:51:47</span></div><div class="row" style="top:416px;height:47px;line-height:46px"><i class="cb" style="top:14.0px"></i><svg class="abs" style="left:50.3px;top:10.0px" width="20" height="19" viewBox="0 0 20 19"><use href="#i-star"/></svg><span class="c b" style="left:152px;font-size:15px;letter-spacing:-0.12px">P00050</span><span class="c" style="left:252px;letter-spacing:-0.01px">03/03/2025 13:40:55</span><span class="c" style="left:426.3px;letter-spacing:-0.27px">Della</span><span class="c" style="left:671px;letter-spacing:-0.19px">Divisi Amal Us...</span><svg class="abs" style="left:799px;top:9.5px" width="26.5" height="26.5" viewBox="0 0 52 52"><use href="#i-logo2"/></svg><span class="c" style="left:829px;top:0.5px;font-size:15.6px;letter-spacing:0.24px">Administrator</span><svg class="abs ck" style="left:1004.8px;top:11.4px" width="19" height="19" viewBox="0 0 18 18"><use href="#i-clock"/></svg><span class="c b" style="right:364px;font-size:15.1px">Rp 150.000</span><div class="badge bg-s" style="top:8.7px"><span style="letter-spacing:0.06px">Sepenuhnya Dita...</span></div><span class="c" style="left:1542px;letter-spacing:-0.01px">03/03/2025 13:31:48</span></div><div class="row alt" style="top:463px;height:46px;line-height:45px"><i class="cb" style="top:13.5px"></i><svg class="abs" style="left:50.3px;top:9.5px" width="20" height="19" viewBox="0 0 20 19"><use href="#i-star"/></svg><span class="c b" style="left:152px;font-size:15px;letter-spacing:-0.12px">P00049</span><span class="c" style="left:252px;letter-spacing:-0.01px">03/03/2025 13:25:35</span><span class="c" style="left:426.3px;font-size:14.8px;letter-spacing:0.01px">ARYA ADHY NUGROHO</span><span class="c" style="left:671px;letter-spacing:-0.19px">Divisi Amal Us...</span><svg class="abs" style="left:799px;top:9.0px" width="26.5" height="26.5" viewBox="0 0 52 52"><use href="#i-logo2"/></svg><span class="c" style="left:829px;top:0.5px;font-size:15.6px;letter-spacing:0.24px">Administrator</span><svg class="abs ck" style="left:1004.8px;top:10.9px" width="19" height="19" viewBox="0 0 18 18"><use href="#i-clock"/></svg><span class="c b" style="right:364px;font-size:15.1px">Rp 10.000</span><div class="badge bg-s" style="top:8.2px"><span style="letter-spacing:0.06px">Sepenuhnya Dita...</span></div><span class="c" style="left:1542px;letter-spacing:-0.01px">03/03/2025 13:25:09</span></div><div class="row" style="top:509px;height:47px;line-height:46px"><i class="cb" style="top:14.0px"></i><svg class="abs" style="left:50.3px;top:10.0px" width="20" height="19" viewBox="0 0 20 19"><use href="#i-star"/></svg><span class="c b" style="left:152px;font-size:15px;letter-spacing:-0.12px">P00048</span><span class="c" style="left:252px;letter-spacing:-0.01px">03/03/2025 13:23:19</span><span class="c" style="left:426.3px;letter-spacing:-0.27px">Della</span><span class="c" style="left:671px;letter-spacing:-0.19px">Divisi Amal Us...</span><svg class="abs" style="left:799px;top:9.5px" width="26.5" height="26.5" viewBox="0 0 52 52"><use href="#i-logo2"/></svg><span class="c" style="left:829px;top:0.5px;font-size:15.6px;letter-spacing:0.24px">Administrator</span><svg class="abs ck" style="left:1004.8px;top:11.4px" width="19" height="19" viewBox="0 0 18 18"><use href="#i-clock"/></svg><span class="c b" style="right:364px;font-size:15.1px">Rp 50.000</span><div class="badge bg-s" style="top:8.7px"><span style="letter-spacing:0.06px">Sepenuhnya Dita...</span></div><span class="c" style="left:1542px;letter-spacing:-0.01px">03/03/2025 13:22:51</span></div><div class="row alt" style="top:556px;height:47px;line-height:46px"><i class="cb" style="top:14.0px"></i><svg class="abs" style="left:50.3px;top:10.0px" width="20" height="19" viewBox="0 0 20 19"><use href="#i-star"/></svg><span class="c b" style="left:152px;font-size:15px;letter-spacing:-0.12px">P00047</span><span class="c" style="left:252px;letter-spacing:-0.01px">03/03/2025 13:10:34</span><span class="c" style="left:426.3px;font-size:14px;letter-spacing:-0.14px">AGUS EFENDI,S.SOS, MS.SI</span><span class="c" style="left:671px;letter-spacing:-0.19px">Divisi Amal Us...</span><svg class="abs" style="left:799px;top:9.5px" width="26.5" height="26.5" viewBox="0 0 52 52"><use href="#i-logo2"/></svg><span class="c" style="left:829px;top:0.5px;font-size:15.6px;letter-spacing:0.24px">Administrator</span><svg class="abs ck" style="left:1004.8px;top:11.4px" width="19" height="19" viewBox="0 0 18 18"><use href="#i-clock"/></svg><span class="c b" style="right:364px;font-size:15.1px">Rp 1.600.000</span><div class="badge bg-s" style="top:8.7px"><span style="letter-spacing:0.06px">Sepenuhnya Dita...</span></div><span class="c" style="left:1542px;letter-spacing:-0.01px">03/03/2025 13:06:54</span></div><div class="row" style="top:603px;height:46px;line-height:45px"><i class="cb" style="top:13.5px"></i><svg class="abs" style="left:50.3px;top:9.5px" width="20" height="19" viewBox="0 0 20 19"><use href="#i-star"/></svg><span class="c b" style="left:152px;font-size:15px;letter-spacing:-0.12px">P00046</span><span class="c" style="left:252px;letter-spacing:-0.01px">25/02/2025 13:40:07</span><span class="c" style="left:426.3px;font-size:14px;letter-spacing:-0.14px">AGUS EFENDI,S.SOS, MS.SI</span><span class="c" style="left:671px;letter-spacing:-0.19px">Divisi Amal Us...</span><svg class="abs" style="left:799px;top:9.0px" width="26.5" height="26.5" viewBox="0 0 52 52"><use href="#i-logo2"/></svg><span class="c" style="left:829px;top:0.5px;font-size:15.6px;letter-spacing:0.24px">Administrator</span><svg class="abs ck" style="left:1004.8px;top:10.9px" width="19" height="19" viewBox="0 0 18 18"><use href="#i-clock"/></svg><span class="c b" style="right:364px;font-size:15.1px">Rp 0</span><div class="badge bg-s" style="top:8.2px"><span style="letter-spacing:0.06px">Sepenuhnya Dita...</span></div><span class="c" style="left:1542px;letter-spacing:-0.01px">25/02/2025 13:39:44</span></div><div class="row alt" style="top:649px;height:47px;line-height:46px"><i class="cb" style="top:14.0px"></i><svg class="abs" style="left:50.3px;top:10.0px" width="20" height="19" viewBox="0 0 20 19"><use href="#i-star"/></svg><span class="c b" style="left:152px;font-size:15px;letter-spacing:-0.12px">P00044</span><span class="c" style="left:252px;letter-spacing:-0.01px">24/02/2025 13:16:24</span><span class="c" style="left:426.3px;font-size:14.8px;letter-spacing:0.01px">ARYA ADHY NUGROHO</span><span class="c" style="left:671px;letter-spacing:-0.19px">Divisi Amal Us...</span><svg class="abs" style="left:799px;top:9.5px" width="26.5" height="26.5" viewBox="0 0 52 52"><use href="#i-logo2"/></svg><span class="c" style="left:829px;top:0.5px;font-size:15.6px;letter-spacing:0.24px">Administrator</span><svg class="abs ck" style="left:1004.8px;top:11.4px" width="19" height="19" viewBox="0 0 18 18"><use href="#i-clock"/></svg><span class="c b" style="right:364px;font-size:15.1px">Rp 400.000</span><div class="badge bg-n" style="top:8.7px"><span style="letter-spacing:-0.22px">Belum</span></div><span class="c" style="left:1542px;letter-spacing:-0.01px">24/02/2025 13:15:38</span></div><div class="row" style="top:696px;height:46px;line-height:45px"><i class="cb" style="top:13.5px"></i><svg class="abs" style="left:50.3px;top:9.5px" width="20" height="19" viewBox="0 0 20 19"><use href="#i-star"/></svg><span class="c b" style="left:152px;font-size:15px;letter-spacing:-0.12px">P00043</span><span class="c" style="left:252px;letter-spacing:-0.01px">24/02/2025 13:14:21</span><span class="c" style="left:426.3px;font-size:14px;letter-spacing:-0.14px">AGUS EFENDI,S.SOS, MS.SI</span><span class="c" style="left:671px;letter-spacing:-0.19px">Divisi Amal Us...</span><svg class="abs" style="left:799px;top:9.0px" width="26.5" height="26.5" viewBox="0 0 52 52"><use href="#i-logo2"/></svg><span class="c" style="left:829px;top:0.5px;font-size:15.6px;letter-spacing:0.24px">Administrator</span><svg class="abs ck" style="left:1004.8px;top:10.9px" width="19" height="19" viewBox="0 0 18 18"><use href="#i-clock"/></svg><span class="c b" style="right:364px;font-size:15.1px">Rp 0</span><div class="badge bg-s" style="top:8.2px"><span style="letter-spacing:0.06px">Sepenuhnya Dita...</span></div><span class="c" style="left:1542px;letter-spacing:-0.01px">24/02/2025 13:14:10</span></div><div class="row alt" style="top:742px;height:47px;line-height:46px"><i class="cb" style="top:14.0px"></i><svg class="abs" style="left:50.3px;top:10.0px" width="20" height="19" viewBox="0 0 20 19"><use href="#i-star"/></svg><span class="c b" style="left:152px;font-size:15px;letter-spacing:-0.12px">P00042</span><span class="c" style="left:252px;letter-spacing:-0.01px">24/02/2025 13:12:34</span><span class="c" style="left:426.3px;font-size:14px;letter-spacing:-0.14px">AGUS EFENDI,S.SOS, MS.SI</span><span class="c" style="left:671px;letter-spacing:-0.19px">Divisi Amal Us...</span><svg class="abs" style="left:799px;top:9.5px" width="26.5" height="26.5" viewBox="0 0 52 52"><use href="#i-logo2"/></svg><span class="c" style="left:829px;top:0.5px;font-size:15.6px;letter-spacing:0.24px">Administrator</span><svg class="abs ck" style="left:1004.8px;top:11.4px" width="19" height="19" viewBox="0 0 18 18"><use href="#i-clock"/></svg><span class="c b" style="right:364px;font-size:15.1px">Rp 2.000</span><div class="badge bg-s" style="top:8.7px"><span style="letter-spacing:0.06px">Sepenuhnya Dita...</span></div><span class="c" style="left:1542px;letter-spacing:-0.01px">24/02/2025 13:12:22</span></div></div><div class="abs" style="left:1911px;top:119px;width:5px;height:789px;background:#f8f9fa"></div><div class="abs" style="left:1911px;top:119px;width:5px;height:254px;background:#888;border-radius:0 0 0 5px"></div><div class="abs" style="left:157px;top:116px;width:1762px;height:793px;border:3px solid #f00;border-left-width:4px;border-radius:2px 0 0 0;pointer-events:none"></div>
</body></html>
